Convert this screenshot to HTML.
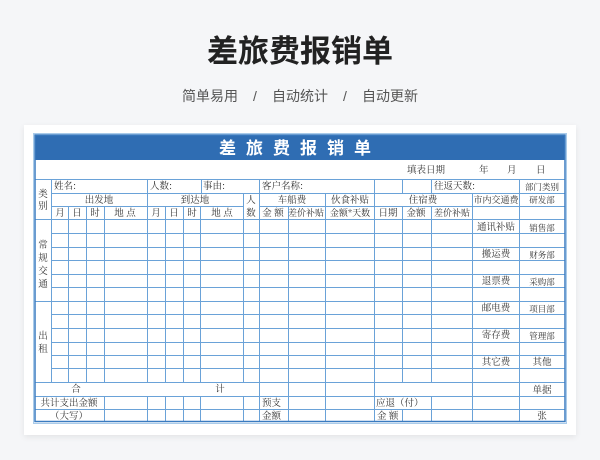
<!DOCTYPE html>
<html><head><meta charset="utf-8"><style>
html,body{margin:0;padding:0}
body{width:600px;height:460px;background:#f5f6f8;position:relative;overflow:hidden;font-family:"Liberation Sans","Noto Sans CJK SC",sans-serif}
.t{position:absolute;left:0;width:600px;text-align:center}
#h{top:26px;font-size:31px;font-weight:bold;color:#222;letter-spacing:0px}
#s{top:86px;font-size:14px;color:#555;word-spacing:0}
#s span{display:inline-block;width:34px;text-align:center}
#card{position:absolute;left:24px;top:125px;width:552px;height:310px;background:#fff;box-shadow:0 2px 6px rgba(0,0,0,0.08)}
svg{position:absolute;left:0;top:0}
svg text{font-family:"Noto Serif CJK SC","Liberation Serif",serif;font-size:9.5px;fill:#333}
</style></head><body>
<div class="t" id="h">差旅费报销单</div>
<div class="t" id="s">简单易用<span>/</span>自动统计<span>/</span>自动更新</div>
<div id="card"></div>
<svg width="600" height="460" viewBox="0 0 600 460">
<rect x="33.5" y="133.5" width="533" height="290" fill="none" stroke="#a9cbea" stroke-width="1"/>
<rect x="35" y="135" width="530" height="25" fill="#2f6db3"/>
<text x="300" y="154" text-anchor="middle" style="font-family:'Noto Sans CJK SC',sans-serif;font-size:17px;font-weight:bold;fill:#fff;letter-spacing:10px">差旅费报销单</text>
<g stroke="#6aa2d8" stroke-width="1" fill="none">
<path d="M35 179.5H565M51 193.5H565M51 206.5H243M259 206.5H565M35 219.5H565"/>
<path d="M51 233.5H565M51 247.5H565M51 260.5H565M51 274.5H565M51 287.5H565M35 301.5H565M51 314.5H565M51 328.5H565M51 342.5H565M51 355.5H565M51 368.5H565M35 382.5H565M35 396.5H565M35 409.5H565"/>
<path d="M51.5 179V382M68.5 206V382M86.5 206V382M104.5 206V382M104.5 396V421M165.5 206V382M165.5 396V421M183.5 206V382M183.5 396V421M200.5 206V382M200.5 396V421M201.5 179V193M147.5 179V382M147.5 396V421M243.5 193V382M243.5 396V421M259.5 179V421M288.5 206V421M325.5 193V421M374.5 179V421M402.5 179V193M402.5 206V382M402.5 409V421M431.5 179V193M431.5 206V382M431.5 396V421M472.5 193V421M519.5 179V421"/>
</g>
<rect x="35" y="135" width="530" height="286.5" fill="none" stroke="#3a7bc0" stroke-width="1.5"/>
<g>
<text x="407" y="173">填表日期</text><text x="479" y="173">年</text><text x="507" y="173">月</text><text x="536" y="173">日</text>
<text x="54" y="189">姓名:</text><text x="150" y="189">人数:</text><text x="203" y="189">事由:</text><text x="262" y="189">客户名称:</text><text x="434" y="189">往返天数:</text>
<text x="542" y="190" text-anchor="middle" style="font-size:8.5px">部门类别</text>
<text x="43" y="197" text-anchor="middle">类</text><text x="43" y="209" text-anchor="middle">别</text>
<text x="99" y="203" text-anchor="middle">出发地</text><text x="195" y="203" text-anchor="middle">到达地</text>
<text x="251" y="203" text-anchor="middle">人</text><text x="251" y="216" text-anchor="middle">数</text>
<text x="292" y="203" text-anchor="middle">车船费</text><text x="350" y="203" text-anchor="middle">伙食补贴</text><text x="423" y="203" text-anchor="middle">住宿费</text><text x="496" y="203" text-anchor="middle" style="font-size:9px">市内交通费</text><text x="542" y="203" text-anchor="middle" style="font-size:8.5px">研发部</text>
<text x="60" y="216" text-anchor="middle">月</text><text x="77" y="216" text-anchor="middle">日</text><text x="95" y="216" text-anchor="middle">时</text><text x="125" y="216" text-anchor="middle">地 点</text>
<text x="156" y="216" text-anchor="middle">月</text><text x="174" y="216" text-anchor="middle">日</text><text x="192" y="216" text-anchor="middle">时</text><text x="222" y="216" text-anchor="middle">地 点</text>
<text x="273" y="216" text-anchor="middle">金 额</text><text x="306" y="216" text-anchor="middle" style="font-size:9px">差价补贴</text><text x="350" y="216" text-anchor="middle" style="font-size:9px">金额*天数</text><text x="388" y="216" text-anchor="middle">日期</text><text x="416" y="216" text-anchor="middle">金额</text><text x="452" y="216" text-anchor="middle" style="font-size:9px">差价补贴</text>
<text x="496" y="230" text-anchor="middle">通讯补贴</text><text x="542" y="231" text-anchor="middle" style="font-size:8.5px">销售部</text>
<text x="496" y="257" text-anchor="middle">搬运费</text><text x="542" y="258" text-anchor="middle" style="font-size:8.5px">财务部</text>
<text x="496" y="284" text-anchor="middle">退票费</text><text x="542" y="285" text-anchor="middle" style="font-size:8.5px">采购部</text>
<text x="496" y="311" text-anchor="middle">邮电费</text><text x="542" y="312" text-anchor="middle" style="font-size:8.5px">项目部</text>
<text x="496" y="338" text-anchor="middle">寄存费</text><text x="542" y="339" text-anchor="middle" style="font-size:8.5px">管理部</text>
<text x="496" y="365" text-anchor="middle">其它费</text><text x="542" y="365" text-anchor="middle">其他</text>
<text x="43" y="248" text-anchor="middle">常</text><text x="43" y="261" text-anchor="middle">规</text><text x="43" y="274" text-anchor="middle">交</text><text x="43" y="287" text-anchor="middle">通</text>
<text x="43" y="339" text-anchor="middle">出</text><text x="43" y="352" text-anchor="middle">租</text>
<text x="76" y="392" text-anchor="middle">合</text><text x="220" y="392" text-anchor="middle">计</text><text x="542" y="393" text-anchor="middle">单据</text>
<text x="69" y="406" text-anchor="middle">共计支出金额</text><text x="262" y="406">预支</text><text x="376" y="406">应退（付）</text>
<text x="69" y="419" text-anchor="middle">（大写）</text><text x="262" y="419">金额</text><text x="377" y="419">金 额</text><text x="542" y="419" text-anchor="middle">张</text>
</g>
</svg>
</body></html>
